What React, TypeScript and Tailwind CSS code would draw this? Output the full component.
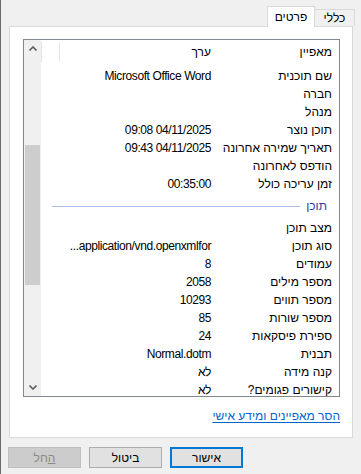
import React from 'react'

type Row = { name: string; value?: string }

const general: Row[] = [
  { name: 'שם תוכנית', value: 'Microsoft Office Word' },
  { name: 'חברה' },
  { name: 'מנהל' },
  { name: 'תוכן נוצר', value: '09:08 04/11/2025' },
  { name: 'תאריך שמירה אחרונה', value: '09:43 04/11/2025' },
  { name: 'הודפס לאחרונה' },
  { name: 'זמן עריכה כולל', value: '00:35:00' },
]

const content: Row[] = [
  { name: 'מצב תוכן' },
  { name: 'סוג תוכן', value: '...application/vnd.openxmlfor' },
  { name: 'עמודים', value: '8' },
  { name: 'מספר מילים', value: '2058' },
  { name: 'מספר תווים', value: '10293' },
  { name: 'מספר שורות', value: '85' },
  { name: 'ספירת פיסקאות', value: '24' },
  { name: 'תבנית', value: 'Normal.dotm' },
  { name: 'קנה מידה', value: 'לא' },
  { name: 'קישורים פגומים?', value: 'לא' },
]

function PropRow({ row }: { row: Row }) {
  return (
    <div className="flex h-[18px] items-center text-[#000]">
      <div className="w-[121px] shrink-0 pr-[7px] text-right whitespace-nowrap">{row.name}</div>
      <div className="w-[159px] shrink-0 pr-[7px] text-right whitespace-nowrap overflow-hidden">
        {row.value && (
          <span dir="ltr" className="tracking-[-0.4px]">
            {row.value}
          </span>
        )}
      </div>
    </div>
  )
}

function Chevron({ up }: { up?: boolean }) {
  return (
    <svg width="8" height="5" viewBox="0 0 8 5" className="block">
      <path
        d={up ? 'M0.5 4.5 L4 1 L7.5 4.5' : 'M0.5 0.5 L4 4 L7.5 0.5'}
        fill="none"
        stroke="#606060"
        strokeWidth="1.6"
      />
    </svg>
  )
}

function Button({ label, primary, disabled }: { label: React.ReactNode; primary?: boolean; disabled?: boolean }) {
  const cls = disabled
    ? 'bg-[#cccccc] border border-[#bfbfbf] text-[#8a8a8a]'
    : primary
      ? 'bg-[#e1e1e1] border-2 border-[#0078d7] text-black'
      : 'bg-[#e1e1e1] border border-[#adadad] text-black'
  return (
    <div className={`w-[73px] h-[21px] flex items-center justify-center ${cls}`}>{label}</div>
  )
}

export default function App() {
  return (
    <div
      dir="rtl"
      className="w-[361px] h-[474px] bg-[#f0f0f0] border-l border-[#6b6b6b] overflow-hidden text-[12px] leading-none"
      style={{ fontFamily: '"Liberation Sans", "DejaVu Sans", sans-serif' }}
    >
      {/* tabs */}
      <div className="flex items-end h-[26px] pt-[6px] pr-[6px]">
        <div className="w-[41px] h-[17px] border-t border-x border-[#d9d9d9] bg-[#f0f0f0] flex items-center justify-center">
          כללי
        </div>
        <div className="relative z-10 -mb-px w-[48px] h-[21px] border-t border-x border-[#d9d9d9] bg-white flex items-center justify-center -mr-px">
          פרטים
        </div>
      </div>

      {/* panel */}
      <div className="mr-[8px] ml-[8px] h-[412px] bg-white border border-[#d9d9d9] pt-[12px] pr-[12px] pl-[13px]">
        <div className="h-[358px] border border-[#828790] flex overflow-hidden">
          <div className="flex-1 overflow-hidden">
            {/* header */}
            <div className="flex h-[24px] items-center">
              <div className="w-[121px] shrink-0 pr-[7px] text-right">מאפיין</div>
              <div className="w-[159px] shrink-0 pr-[7px] text-right border-l border-[#e5e5e5] h-[20px] flex items-center">
                ערך
              </div>
              <div className="flex-1 h-[20px] border-l border-[#e5e5e5]" />
            </div>
            <div className="pt-[3px]">
              {general.map((r) => (
                <PropRow key={r.name} row={r} />
              ))}
              <div className="flex h-[26px] items-center pr-[12px] pl-[11px] gap-[6px]">
                <span className="text-[#2b3ba6]">תוכן</span>
                <div className="flex-1 h-px bg-[#a8bde8]" />
              </div>
              {content.map((r) => (
                <PropRow key={r.name} row={r} />
              ))}
            </div>
          </div>
          {/* scrollbar */}
          <div className="w-[17px] shrink-0 bg-[#f0f0f0] flex flex-col">
            <div className="h-[17px] flex items-center justify-center">
              <Chevron up />
            </div>
            <div className="flex-1 flex flex-col">
              <div className="mt-[88px] h-[140px] w-[15px] mr-[1px] bg-[#cdcdcd]" />
            </div>
            <div className="h-[17px] flex items-center justify-center">
              <Chevron />
            </div>
          </div>
        </div>
        <div className="mt-[13px] text-[#0066cc] underline underline-offset-2">הסר מאפיינים ומידע אישי</div>
      </div>

      {/* buttons */}
      <div className="flex justify-end gap-[8px] mt-[9px] pl-[7px]">
        <Button label="אישור" primary />
        <Button label="ביטול" />
        <Button
          disabled
          label={
            <span>
              <span className="underline">ה</span>חל
            </span>
          }
        />
      </div>
    </div>
  )
}
